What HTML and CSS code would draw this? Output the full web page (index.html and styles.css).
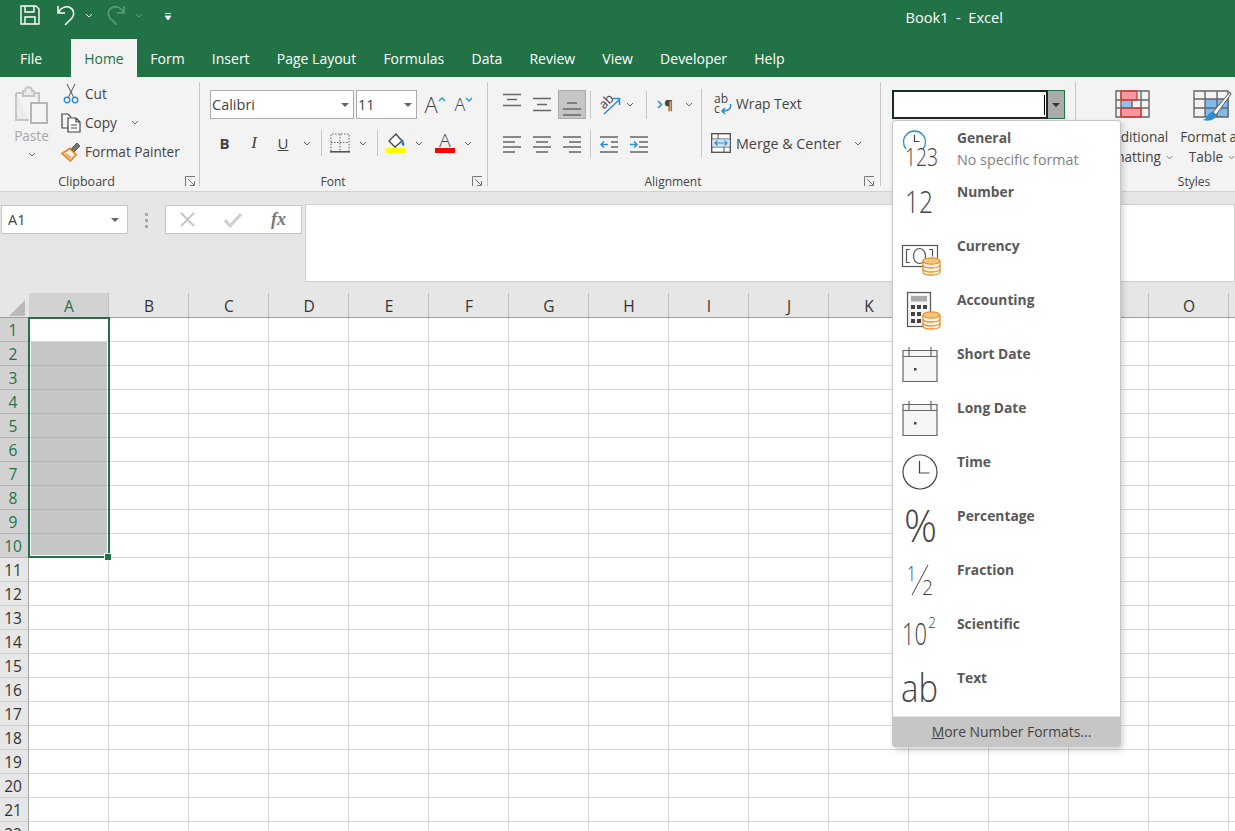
FILE: index.html
```html
<!DOCTYPE html>
<html>
	<head>
		<title>Book1 - Excel</title>
		<link rel="stylesheet" href="styles.css">
	</head>
	<body>
		<svg class="defs" width="0" height="0">
			<symbol id="chev" viewBox="0 0 8 5"><path d="M1 1l3 3 3-3" fill="none" stroke="#666" stroke-width="1"/></symbol>
			<symbol id="launch" viewBox="0 0 11 11"><path d="M.5 10V.5H10M3 3l6 6M5 9.500h4.500V5" fill="none" stroke="#777"/></symbol>
			<symbol id="coins" viewBox="0 0 19 19">
				<path d="M1 4v11c0 4 17 4 17 0V4" fill="#fdf3e3" stroke="#e8912d" stroke-width="1.300"/>
				<ellipse cx="9.500" cy="4" rx="8.500" ry="3.200" fill="#f5c77e" stroke="#e8912d" stroke-width="1.300"/>
				<path d="M1 8c0 4 17 4 17 0M1 12c0 4 17 4 17 0" fill="none" stroke="#e8912d" stroke-width="1.300"/>
			</symbol>
			<symbol id="calendar" viewBox="0 0 36 36">
				<path d="M1 4.500h34v31H1zM1 10.500h34M7 1v9M29 1v9" fill="#f6f6f6" stroke="#666" stroke-width="1.200"/>
				<rect x="12" y="22" width="2.500" height="2.500" fill="#444"/>
			</symbol>
		</svg>

		<div class="titlebar">
			<div class="qat">
				<svg class="ico-save" width="20" height="20" viewBox="0 0 20 20"><path d="M1 1h15l3 3v15H1zM5 1v6h9V1M5 19v-7h10v7" fill="none" stroke="#fff" stroke-width="1.400"/></svg>
				<svg class="ico-undo" width="20" height="22" viewBox="0 0 20 22"><path d="M2 2v7h7M2 9c3-6 8-7 11-6 5 2 6 7 3 11l-7 7" fill="none" stroke="#fff" stroke-width="1.500"/></svg>
				<svg class="chev-undo" width="8" height="5" viewBox="0 0 8 5"><path d="M1 1l3 3 3-3" fill="none" stroke="#fff"/></svg>
				<svg class="ico-redo" width="20" height="22" viewBox="0 0 20 22"><path d="M18 2v7h-7M18 9c-3-6-8-7-11-6-5 2-6 7-3 11l7 7" fill="none" stroke="#5f9c7e" stroke-width="1.500"/></svg>
				<svg class="chev-redo" width="8" height="5" viewBox="0 0 8 5"><path d="M1 1l3 3 3-3" fill="none" stroke="#5f9c7e"/></svg>
				<svg class="ico-custom" width="8" height="8" viewBox="0 0 8 8"><path d="M1 .5h6M1 3h6L4 7z" fill="#fff" stroke="#fff" stroke-width=".8"/></svg>
			</div>
			<div class="doc-title">Book1&nbsp; -&nbsp; Excel</div>
		</div>

		<nav class="tabs">
			<a class="tab file">File</a>
			<a class="tab active">Home</a>
			<a class="tab">Form</a>
			<a class="tab">Insert</a>
			<a class="tab">Page Layout</a>
			<a class="tab">Formulas</a>
			<a class="tab">Data</a>
			<a class="tab">Review</a>
			<a class="tab">View</a>
			<a class="tab">Developer</a>
			<a class="tab">Help</a>
		</nav>

		<div class="ribbon">
			<section class="group clipboard">
				<div class="group-body">
					<div class="paste">
						<svg width="35" height="38" viewBox="0 0 35 38">
							<path d="M2 7h7M19 7h6v9M9 5h2c0-5 7-5 7 0h2v5H9zM2 7v27h13" fill="#ececec" stroke="#c6c6c6" stroke-width="2"/>
							<rect x="17" y="17" width="16" height="20" fill="#f3f3f3" stroke="#b5b5b5" stroke-width="2"/>
						</svg>
						<span class="paste-label">Paste</span>
						<svg class="chev-paste" width="8" height="5"><use href="#chev"/></svg>
					</div>
					<div class="clip-actions">
						<div class="clip-row">
							<svg class="clip-ico" width="20" height="21" viewBox="0 0 20 21"><path d="M6 1l7 14M14 1L7 15" stroke="#555" fill="none"/><circle cx="6" cy="17" r="2.700" fill="none" stroke="#2e8fd0" stroke-width="1.400"/><circle cx="14" cy="17" r="2.700" fill="none" stroke="#2e8fd0" stroke-width="1.400"/></svg>
							<span>Cut</span>
						</div>
						<div class="clip-row">
							<svg class="clip-ico" width="20" height="20" viewBox="0 0 20 20"><path d="M7 15H1V1h6l3 3" fill="none" stroke="#444" stroke-width="1.200"/><path d="M7 5h8l4 4v10H7zM15 5v4h4M10 12h6M10 15h6" fill="#fff" stroke="#444" stroke-width="1.200"/></svg>
							<span>Copy</span>
							<svg class="chev-copy" width="8" height="5"><use href="#chev"/></svg>
						</div>
						<div class="clip-row">
							<svg class="clip-ico" width="20" height="20" viewBox="0 0 20 20"><path d="M1 11.500l8-5 6 6-5.500 6.500z" fill="#fdf0de" stroke="#e5892b" stroke-width="1.800"/><path d="M5 12l5 4" stroke="#e5892b" stroke-width="1.400"/><path d="M10.500 7l1.500-2 4-4 3 3-4 4-2 1.500z" fill="#777" stroke="#555"/></svg>
							<span>Format Painter</span>
						</div>
					</div>
				</div>
				<div class="group-foot"><span class="group-name">Clipboard</span><svg class="launcher" width="11" height="11"><use href="#launch"/></svg></div>
			</section>
			<div class="sep"></div>

			<section class="group font">
				<div class="group-body column">
					<div class="font-row">
						<div class="combo font-name"><span>Calibri</span><i class="tri"></i></div>
						<div class="combo font-size"><span>11</span><i class="tri"></i></div>
						<div class="cell grow-a"><span class="big-a">A</span><svg class="hat" width="8" height="5" viewBox="0 0 8 5"><path d="M1 4l3-3 3 3" fill="none" stroke="#2e8fd0" stroke-width="1.300"/></svg></div>
						<div class="cell shrink-a"><span class="small-a">A</span><svg class="hat" width="8" height="5" viewBox="0 0 8 5"><path d="M1 1l3 3 3-3" fill="none" stroke="#2e8fd0" stroke-width="1.300"/></svg></div>
					</div>
					<div class="format-row">
						<div class="cell w29 t-bold">B</div>
						<div class="cell w30 t-italic">I</div>
						<div class="cell w28 t-under">U</div>
						<div class="cell w20"><svg width="8" height="5"><use href="#chev"/></svg></div>
						<div class="vsep m4"></div>
						<div class="cell w28"><svg width="20" height="20" viewBox="0 0 20 20"><path d="M1 18V1h18v17M10 1v17M1 9.500h18" fill="none" stroke="#666" stroke-dasharray="1.500 1.500"/><path d="M0 18.800h20" stroke="#555" stroke-width="1.600"/></svg></div>
						<div class="cell w18"><svg width="8" height="5"><use href="#chev"/></svg></div>
						<div class="vsep m5"></div>
						<div class="cell w26"><svg width="20" height="20" viewBox="0 0 20 20"><path d="M10 1l6 7-7 6-6-6z" fill="#fff" stroke="#444" stroke-width="1.300"/><path d="M16 6c2 2 3 5 2 7-3 0-3-4-2-7z" fill="#2e7fb8"/><rect y="15" width="20" height="5" fill="#ffff00"/></svg></div>
						<div class="cell w20"><svg width="8" height="5"><use href="#chev"/></svg></div>
						<div class="cell w32 font-color"><span>A</span><i class="color-bar"></i></div>
						<div class="cell w14"><svg width="8" height="5"><use href="#chev"/></svg></div>
					</div>
				</div>
				<div class="group-foot"><span class="group-name">Font</span><svg class="launcher" width="11" height="11"><use href="#launch"/></svg></div>
			</section>
			<div class="sep"></div>

			<section class="group alignment">
				<div class="group-body">
					<div class="align-grid">
						<div class="align-row top">
							<div class="cell w30"><svg width="18" height="29" viewBox="0 0 18 29"><path d="M0 4.500h18M4 9.500h10M0 15.500h18" class="line"/></svg></div>
							<div class="cell w30"><svg width="18" height="29" viewBox="0 0 18 29"><path d="M0 8.500h18M4 14.500h10M0 20.500h18" class="line"/></svg></div>
							<div class="cell w28 pressed"><svg width="18" height="27" viewBox="0 0 18 27"><path d="M4 12h10M0 18h18M0 24h18" class="line"/></svg></div>
							<div class="vsep m4"></div>
							<div class="cell w29 orient">
								<svg width="28" height="28" viewBox="-3 -3 28 28"><text class="orient-text" x="0" y="12" transform="rotate(-45 7 8)">ab</text><path d="M5 20L20 6M14 4.500h6.500V11" fill="none" stroke="#2e8fd0" stroke-width="1.600"/></svg>
							</div>
							<div class="cell w12"><svg width="8" height="5"><use href="#chev"/></svg></div>
							<div class="vsep ml10"></div>
							<div class="cell w36 rtl"><svg width="6" height="9" viewBox="0 0 6 9"><path d="M1 1l3.500 3.500L1 8" fill="none" stroke="#2e8fd0" stroke-width="1.600"/></svg><span>¶</span></div>
							<div class="cell w12"><svg width="8" height="5"><use href="#chev"/></svg></div>
						</div>
						<div class="align-row bottom">
							<div class="cell w30"><svg width="18" height="17" viewBox="0 0 18 17"><path d="M0 1h18M0 6h12M0 11h18M0 16h12" class="line"/></svg></div>
							<div class="cell w30"><svg width="18" height="17" viewBox="0 0 18 17"><path d="M0 1h18M3 6h12M0 11h18M3 16h12" class="line"/></svg></div>
							<div class="cell w30"><svg width="18" height="17" viewBox="0 0 18 17"><path d="M0 1h18M6 6h12M0 11h18M6 16h12" class="line"/></svg></div>
							<div class="vsep tall m3"></div>
							<div class="cell w30"><svg width="18" height="17" viewBox="0 0 18 17"><path d="M0 1h18M11 6h7M11 11h7M0 16h18" class="line"/><path d="M8 8.500H1M4 5.500l-3 3 3 3" fill="none" stroke="#2e8fd0" stroke-width="1.500"/></svg></div>
							<div class="cell w30"><svg width="18" height="17" viewBox="0 0 18 17"><path d="M0 1h18M9 6h9M9 11h9M0 16h18" class="line"/><path d="M0 8.500h7M4 5.500l3 3-3 3" fill="none" stroke="#2e8fd0" stroke-width="1.500"/></svg></div>
						</div>
					</div>
					<div class="vsep long"></div>
					<div class="wrap-col">
						<div class="wrap-row">
							<svg width="18" height="26" viewBox="0 -3 18 26"><text class="wrap-ab" x="0" y="9">ab</text><text class="wrap-ab" x="0" y="19">c</text><path d="M16.500 10c1 5-2 7-8.500 7M11 14l-3 3 3 3" fill="none" stroke="#2e8fd0" stroke-width="1.600"/></svg>
							<span>Wrap Text</span>
						</div>
						<div class="merge-row">
							<svg width="20" height="20" viewBox="0 0 20 20"><rect x=".7" y=".7" width="18.600" height="18.600" fill="#fff" stroke="#555" stroke-width="1.400"/><path d="M1 6h18M1 14h18M7 1v5M13 14v5" stroke="#555" fill="none"/><rect x="1.400" y="6.500" width="17.200" height="7" fill="#cde6f7"/><path d="M4 10h12M6.500 7.500L4 10l2.500 2.500M13.500 7.500L16 10l-2.500 2.500" fill="none" stroke="#2e8fd0" stroke-width="1.200"/></svg>
							<span class="merge-text">Merge &amp; Center</span>
							<svg class="merge-chev" width="8" height="5"><use href="#chev"/></svg>
						</div>
					</div>
				</div>
				<div class="group-foot"><span class="group-name">Alignment</span><svg class="launcher" width="11" height="11"><use href="#launch"/></svg></div>
			</section>
			<div class="sep"></div>

			<section class="group number">
				<div class="group-body">
					<div class="num-box">
						<div class="num-input"><i class="ibeam"></i></div>
						<div class="num-drop"><i class="tri dark"></i></div>
					</div>
				</div>
			</section>
			<div class="sep"></div>

			<section class="group styles">
				<div class="group-body">
					<div class="big-btn">
						<svg class="big-ico" width="35" height="28" viewBox="0 0 35 28"><rect x="6" y="1" width="16" height="9" fill="#f8979f"/><rect x="6" y="10" width="11" height="8" fill="#8cc3ec"/><rect x="6" y="18" width="20" height="9" fill="#f8979f"/><path d="M1 1h33v26H1zM1 10h33M1 18h33M6 1v26M17 10v8M26 1v26" fill="none" stroke="#666" stroke-width="1.400"/><path d="M6 10h16V1H6zM6 18h20v9H6z" fill="none" stroke="#e03b3b" stroke-width="1.300"/></svg>
						<span class="big-text">Conditional</span>
						<span class="big-text">Formatting <svg width="7" height="5"><use href="#chev"/></svg></span>
					</div>
					<div class="big-btn">
						<svg class="big-ico tall" width="39" height="34" viewBox="0 0 39 34"><rect x="12" y="9" width="24" height="18" fill="#7fbbe9"/><path d="M1 1h34v26H1zM1 9h34M1 18h34M12 1v26M24 1v26" fill="none" stroke="#666" stroke-width="1.400"/><path d="M37 2L20 22l3 3L38 4z" fill="#fff" stroke="#555"/><path d="M20 22c-3 0-5 2-6 5-1 2-3 2-4 3 7 2 13-1 13-5z" fill="#2e8fd0"/></svg>
						<span class="big-text">Format as</span>
						<span class="big-text">Table <svg width="7" height="5"><use href="#chev"/></svg></span>
					</div>
				</div>
				<div class="group-foot"><span class="group-name">Styles</span><svg class="launcher" width="11" height="11"><use href="#launch"/></svg></div>
			</section>
		</div>

		<div class="formula-area">
			<div class="name-box"><span>A1</span><i class="tri"></i></div>
			<div class="grip"><i></i><i></i><i></i></div>
			<div class="fx-buttons">
				<svg width="15" height="15" viewBox="0 0 16 16"><path d="M1 1l14 14M15 1L1 15" stroke="#c2c2c2" stroke-width="2" fill="none"/></svg>
				<svg width="18" height="16" viewBox="0 0 18 16"><path d="M1 8l5 6L17 2" stroke="#d0d0d0" stroke-width="3" fill="none"/></svg>
				<span class="fx">fx</span>
			</div>
			<div class="formula-input"></div>
		</div>

		<div class="sheet">
			<div class="col-heads">
				<div class="corner"><svg width="17" height="16" viewBox="0 0 17 16"><path d="M16 0v16H0z" fill="#b9b9b9"/></svg></div>
				<div class="col on">A</div><div class="col">B</div><div class="col">C</div><div class="col">D</div>
				<div class="col">E</div><div class="col">F</div><div class="col">G</div><div class="col">H</div>
				<div class="col">I</div><div class="col">J</div><div class="col">K</div><div class="col">L</div>
				<div class="col">M</div><div class="col">N</div><div class="col">O</div><div class="col"></div>
			</div>
			<div class="sheet-body">
				<div class="row-heads">
					<div class="row on">1</div><div class="row on">2</div><div class="row on">3</div><div class="row on">4</div>
					<div class="row on">5</div><div class="row on">6</div><div class="row on">7</div><div class="row on">8</div>
					<div class="row on">9</div><div class="row on">10</div><div class="row">11</div><div class="row">12</div>
					<div class="row">13</div><div class="row">14</div><div class="row">15</div><div class="row">16</div>
					<div class="row">17</div><div class="row">18</div><div class="row">19</div><div class="row">20</div>
					<div class="row">21</div><div class="row">22</div>
				</div>
				<div class="cells"></div>
			</div>
			<div class="selection">
				<div class="selection-fill"></div>
				<i class="handle"></i>
			</div>
		</div>

		<div class="num-menu">
			<div class="menu-item">
				<svg class="menu-ico" width="48" height="54" viewBox="0 0 48 54"><path d="M9 27a11 11 0 1 1 17 0" fill="none" stroke="#2e8fd0" stroke-width="1.300"/><path d="M17.500 13v6.500h5" fill="none" stroke="#444" stroke-width="1.200"/><text class="ico-num" x="8" y="44" font-size="25" textLength="33" lengthAdjust="spacingAndGlyphs">123</text></svg>
				<div class="menu-text"><b>General</b><span>No specific format</span></div>
			</div>
			<div class="menu-item">
				<svg class="menu-ico" width="48" height="54" viewBox="0 0 48 54"><text class="ico-num" x="8" y="37" font-size="32" textLength="28" lengthAdjust="spacingAndGlyphs">12</text></svg>
				<div class="menu-text"><b>Number</b></div>
			</div>
			<div class="menu-item">
				<svg class="menu-ico" width="48" height="54" viewBox="0 0 48 54"><rect x="5.500" y="15.500" width="35" height="21" fill="#fff" stroke="#555" stroke-width="1.200"/><path d="M13 19.500H9.500v13H13M32 19.500h3.500v7" fill="none" stroke="#555" stroke-width="1.200"/><ellipse cx="22.500" cy="26" rx="6" ry="7.500" fill="none" stroke="#555" stroke-width="1.200"/><use href="#coins" x="25" y="27" width="19" height="19"/></svg>
				<div class="menu-text"><b>Currency</b></div>
			</div>
			<div class="menu-item">
				<svg class="menu-ico" width="48" height="54" viewBox="0 0 48 54"><rect x="10.500" y="8.500" width="23" height="34" fill="#f6f6f6" stroke="#555" stroke-width="1.200"/><rect x="14" y="12" width="16" height="5.500" fill="#aaa"/><path d="M14 21h4v4h-4zM20 21h4v4h-4zM26 21h4v4h-4zM14 28h4v4h-4zM20 28h4v4h-4zM14 35h4v4h-4zM20 35h4v4h-4z" fill="#444"/><use href="#coins" x="25" y="27" width="19" height="19"/></svg>
				<div class="menu-text"><b>Accounting</b></div>
			</div>
			<div class="menu-item">
				<svg class="menu-ico" width="48" height="54" viewBox="0 0 48 54"><use href="#calendar" x="5" y="8" width="36" height="36"/></svg>
				<div class="menu-text"><b>Short Date</b></div>
			</div>
			<div class="menu-item">
				<svg class="menu-ico" width="48" height="54" viewBox="0 0 48 54"><use href="#calendar" x="5" y="8" width="36" height="36"/></svg>
				<div class="menu-text"><b>Long Date</b></div>
			</div>
			<div class="menu-item">
				<svg class="menu-ico" width="48" height="54" viewBox="0 0 48 54"><circle cx="23" cy="26" r="17" fill="none" stroke="#444" stroke-width="1.200"/><path d="M22.500 15v12h10" fill="none" stroke="#444" stroke-width="1.200"/></svg>
				<div class="menu-text"><b>Time</b></div>
			</div>
			<div class="menu-item">
				<svg class="menu-ico" width="48" height="54" viewBox="0 0 48 54"><text class="ico-num" x="7" y="42" font-size="44" textLength="33" lengthAdjust="spacingAndGlyphs">%</text></svg>
				<div class="menu-text"><b>Percentage</b></div>
			</div>
			<div class="menu-item">
				<svg class="menu-ico" width="48" height="54" viewBox="0 0 48 54"><text class="ico-num" x="10" y="27" font-size="21" textLength="9" lengthAdjust="spacingAndGlyphs">1</text><path d="M15 41l16-30" stroke="#444" stroke-width="1"/><text class="ico-num" x="25" y="41" font-size="21" textLength="11" lengthAdjust="spacingAndGlyphs">2</text></svg>
				<div class="menu-text"><b>Fraction</b></div>
			</div>
			<div class="menu-item">
				<svg class="menu-ico" width="48" height="54" viewBox="0 0 48 54"><text class="ico-num" x="5" y="37" font-size="31" textLength="25" lengthAdjust="spacingAndGlyphs">10</text><text class="ico-num" x="31" y="20" font-size="14">2</text></svg>
				<div class="menu-text"><b>Scientific</b></div>
			</div>
			<div class="menu-item">
				<svg class="menu-ico" width="48" height="54" viewBox="0 0 48 54"><text class="ico-num" x="4" y="40" font-size="38" textLength="37" lengthAdjust="spacingAndGlyphs">ab</text></svg>
				<div class="menu-text"><b>Text</b></div>
			</div>
			<div class="menu-more"><u>M</u>ore Number Formats...</div>
		</div>
	</body>
</html>
```

FILE: styles.css
```css
* {
	box-sizing: border-box;
	font-family: "Open Sans", "Noto Sans", sans-serif;
}
html, body {
	margin: 0;
	height: 831px;
	overflow: hidden;
}
body {
	position: relative;
	width: 1235px;
	font-size: 13.6px;
	color: #444;
	background: #fff;
}
svg {
	display: block;
	flex: none;
}
.defs {
	position: absolute;
}
i {
	display: block;
}

/* title bar */
.titlebar {
	display: flex;
	align-items: flex-start;
	height: 39px;
	background: #217346;
	color: #fff;
}
.qat {
	display: flex;
	align-items: center;
	padding-left: 20px;
	height: 30px;
}
.ico-undo { margin-left: 16px; }
.chev-undo { margin-left: 9px; }
.ico-redo { margin-left: 13px; }
.chev-redo { margin-left: 9px; }
.ico-custom { margin-left: 21px; margin-top: 4px; }
.doc-title {
	margin-left: auto;
	margin-right: 232px;
	font-size: 14.6px;
	line-height: 34px;
}

/* tabs */
.tabs {
	display: flex;
	height: 38px;
	padding-left: 7px;
	background: #217346;
}
.tab {
	display: flex;
	align-items: center;
	padding: 0 13.6px;
	color: #fff;
	font-size: 14px;
}
.tab.file {
	padding: 0 29px 0 13px;
}
.tab.active {
	padding: 0 13px;
	background: #f3f3f3;
	color: #217346;
}

/* ribbon */
.ribbon {
	display: flex;
	height: 115px;
	background: #f3f3f3;
	border-bottom: 1px solid #d2d2d2;
	overflow: hidden;
}
.sep {
	flex: none;
	width: 1px;
	margin: 5px 0;
	background: #c6c6c6;
}
.group {
	display: flex;
	flex: none;
	flex-direction: column;
	height: 114px;
}
.group-body {
	display: flex;
	height: 94px;
}
.group-body.column {
	flex-direction: column;
}
.group-foot {
	display: flex;
	align-items: center;
	height: 20px;
	font-size: 12px;
}
.group-name {
	flex: 1;
	text-align: center;
}
.launcher {
	margin: 0 5px 0 6px;
}
.clipboard { width: 199px; }
.clipboard .group-foot { font-size: 12.500px; }
.clipboard .group-name { padding-right: 6px; }
.clipboard .launcher { margin-right: 3px; }
.font { width: 287px; }
.alignment { width: 392px; }
.number { width: 194px; }
.styles { width: 258px; }

.cell {
	display: flex;
	flex: none;
	align-items: center;
	justify-content: center;
	height: 100%;
}
.w12 { width: 12px; }
.w14 { width: 14px; }
.w18 { width: 18px; }
.w20 { width: 20px; }
.w26 { width: 26px; }
.w28 { width: 28px; }
.w29 { width: 29px; }
.w30 { width: 30px; }
.w32 { width: 32px; }
.w36 { width: 36px; }
.vsep {
	flex: none;
	width: 1px;
	height: 28px;
	background: #c6c6c6;
}
.m3 { margin: 0 3px; }
.m4 { margin: 0 4px; }
.m5 { margin: 0 5px; }
.ml10 { margin-left: 10px; }
.tri {
	width: 0;
	height: 0;
	border: 4px solid transparent;
	border-top: 4px solid #666;
	border-bottom: 0;
}
.tri.dark {
	border-top-color: #333;
}

/* clipboard */
.paste {
	display: flex;
	flex-direction: column;
	align-items: center;
	width: 61px;
	padding: 9px 0 0 2px;
}
.paste-label {
	margin-top: 2px;
	line-height: 20px;
	color: #a6a6a6;
}
.chev-paste {
	margin-top: 6px;
}
.clip-actions {
	padding-top: 2px;
}
.clip-row {
	display: flex;
	align-items: center;
	height: 29px;
}
.clip-ico {
	margin-right: 4px;
}
.chev-copy {
	margin-left: 14px;
}

/* font */
.font {
	padding-left: 10px;
}
.font .launcher {
	margin-right: 4px;
}
.font .group-foot {
	margin-left: -10px;
}
.font-row {
	display: flex;
	height: 29px;
	margin-top: 13px;
}
.combo {
	display: flex;
	align-items: center;
	justify-content: space-between;
	height: 29px;
	padding: 0 4px 0 1px;
	background: #fff;
	border: 1px solid #ababab;
	font-size: 14.500px;
}
.font-name { width: 144px; margin-right: 2px; }
.font-size { width: 61px; margin-right: 4px; }
.grow-a { width: 28px; }
.shrink-a { width: 30px; }
.big-a {
	font-size: 22px;
	font-weight: 300;
	line-height: 29px;
}
.small-a {
	font-size: 18px;
	font-weight: 300;
	line-height: 29px;
}
.hat {
	align-self: flex-start;
	margin-top: 7px;
}
.format-row {
	display: flex;
	align-items: center;
	height: 20px;
	margin-top: 14px;
}
.format-row .vsep {
	height: 26px;
}
.t-bold {
	font-size: 15px;
	font-weight: 700;
}
.t-italic {
	font-family: "Liberation Serif", serif;
	font-size: 17px;
	font-style: italic;
}
.t-under {
	font-size: 15px;
	text-decoration: underline;
}
.font-color {
	flex-direction: column;
	font-size: 19px;
	font-weight: 300;
	line-height: 15px;
}
.color-bar {
	width: 20px;
	height: 5px;
	background: #f00;
}

/* alignment */
.align-grid {
	width: 205px;
	margin-left: 9px;
}
.align-row {
	display: flex;
	align-items: center;
}
.align-row.top {
	height: 29px;
	margin-top: 13px;
}
.align-row.bottom {
	height: 28px;
	margin-top: 11px;
}
.align-row .vsep.tall {
	height: 28px;
}
.line {
	fill: none;
	stroke: #666;
	stroke-width: 1.400;
}
.pressed {
	margin-left: 1px;
	background: #c5c5c5;
	border: 1px solid #ababab;
}
.orient-text {
	font-size: 13px;
	fill: #444;
}
.rtl {
	gap: 1px;
	font-weight: 700;
	font-size: 13px;
}
.vsep.long {
	height: 68px;
	margin: 12px 9px 0 -1px;
}
.wrap-col {
	width: 153px;
}
.wrap-row {
	display: flex;
	align-items: center;
	gap: 4px;
	height: 29px;
	margin-top: 12px;
	padding-left: 3px;
	font-size: 13.8px;
}
.wrap-ab {
	font-size: 12px;
	fill: #444;
}
.merge-row {
	display: flex;
	align-items: center;
	gap: 5px;
	height: 20px;
	margin-top: 15px;
	font-size: 14.3px;
}
.merge-text {
	flex: 1;
}
.merge-chev {
	margin-right: 2px;
}

/* number */
.number {
	padding-left: 11px;
}
.num-box {
	display: flex;
	height: 29px;
	margin-top: 13px;
}
.num-input {
	display: flex;
	align-items: center;
	justify-content: flex-end;
	width: 156px;
	padding-right: 1px;
	background: #fff;
	border: 2px solid #1c2b22;
}
.ibeam {
	width: 1px;
	height: 20px;
	background: #000;
}
.num-drop {
	display: flex;
	align-items: center;
	justify-content: center;
	width: 17px;
	background: #ababab;
	border: 1px solid #217346;
	border-left: 0;
}

/* styles */
.styles .group-body {
	padding-left: 16px;
}
.big-btn {
	display: flex;
	flex: none;
	flex-direction: column;
	align-items: center;
	width: 80px;
	padding-top: 13px;
}
.big-ico {
	margin-bottom: 9px;
}
.big-ico.tall {
	margin-bottom: 3px;
}
.big-text {
	display: flex;
	align-items: center;
	gap: 5px;
	line-height: 20px;
	white-space: nowrap;
}

/* formula bar */
.formula-area {
	display: flex;
	align-items: flex-start;
	height: 101px;
	padding-top: 12px;
	background: #e6e6e6;
}
.name-box {
	display: flex;
	align-items: center;
	justify-content: space-between;
	width: 127px;
	height: 29px;
	margin: 1px 0 0 1px;
	padding: 0 8px 0 6px;
	background: #fff;
	border: 1px solid #c6c6c6;
	font-size: 14.5px;
}
.grip {
	display: flex;
	flex-direction: column;
	gap: 3px;
	width: 37px;
	padding: 9px 0 0 17px;
}
.grip i {
	width: 3px;
	height: 3px;
	background: #a8a8a8;
}
.fx-buttons {
	display: flex;
	align-items: center;
	justify-content: space-between;
	width: 137px;
	height: 29px;
	margin-top: 1px;
	padding: 0 15px 0 14px;
	background: #fff;
	border: 1px solid #c6c6c6;
}
.fx {
	font-family: "Liberation Serif", serif;
	font-size: 18px;
	font-style: italic;
	font-weight: 700;
	color: #777;
}
.formula-input {
	flex: 1;
	height: 78px;
	margin-left: 3px;
	background: #fff;
	border: 1px solid #d0d0d0;
}

/* sheet */
.sheet {
	position: relative;
	height: 538px;
}
.col-heads {
	display: flex;
	height: 25px;
	background: #e6e6e6;
	border-bottom: 1px solid #9e9e9e;
}
.corner {
	flex: none;
	width: 29px;
	padding: 7px 0 0 9px;
}
.col {
	flex: none;
	width: 80px;
	height: 24px;
	padding-left: 1px;
	font-size: 15.5px;
	line-height: 26px;
	text-align: center;
	color: #333;
	border-right: 1px solid #c0c0c0;
}
.col.on {
	background: #d2d2d2;
	color: #217346;
}
.sheet-body {
	display: flex;
}
.row-heads {
	flex: none;
	width: 29px;
	background: #e6e6e6;
	border-right: 1px solid #a8a8a8;
}
.row {
	height: 24px;
	padding-right: 2px;
	font-size: 15.5px;
	line-height: 24px;
	text-align: center;
	color: #333;
	border-bottom: 1px solid #d0d0d0;
}
.row.on {
	background: #d2d2d2;
	color: #217346;
	border-bottom-color: #b5b5b5;
}
.cells {
	flex: 1;
	background-image:
		repeating-linear-gradient(to right, transparent 0 79px, #d6d6d6 79px 80px),
		repeating-linear-gradient(to bottom, transparent 0 23px, #d6d6d6 23px 24px);
}
.selection {
	position: absolute;
	left: 28px;
	top: 24px;
	width: 82px;
	height: 241px;
	border: 2px solid #217346;
}
.selection-fill {
	height: 213px;
	margin: 23px 1px 0;
	background: repeating-linear-gradient(to bottom, #c6c6c6 0 23px, #b6b6b6 23px 24px);
}
.handle {
	position: absolute;
	right: -3px;
	bottom: -4px;
	width: 6px;
	height: 6px;
	background: #217346;
	outline: 1px solid #fff;
}

/* number format menu */
.num-menu {
	position: absolute;
	left: 892px;
	top: 120px;
	width: 229px;
	height: 627px;
	padding-top: 1px;
	background: #fff;
	border: 1px solid #c6c6c6;
	border-radius: 3px;
	box-shadow: 2px 3px 6px rgba(0, 0, 0, .18);
}
.menu-item {
	display: flex;
	height: 54px;
}
.menu-ico {
	margin-left: 4px;
}
.ico-num {
	font-weight: 300;
	fill: #444;
}
.menu-text {
	display: flex;
	flex-direction: column;
	padding: 6px 0 0 12px;
	line-height: 20px;
	font-size: 13.8px;
	color: #595959;
}
.menu-text b {
	color: #595959;
}
.menu-text span {
	margin-top: 2px;
	font-size: 14.3px;
	color: #7f7f7f;
}
.menu-more {
	height: 29px;
	margin-top: 1px;
	padding-left: 10px;
	background: #c6c6c6;
	line-height: 30px;
	text-align: center;
	font-size: 13.9px;
	color: #444;
	box-shadow: 0 -1px 0 #e2e2e2;
}
```
